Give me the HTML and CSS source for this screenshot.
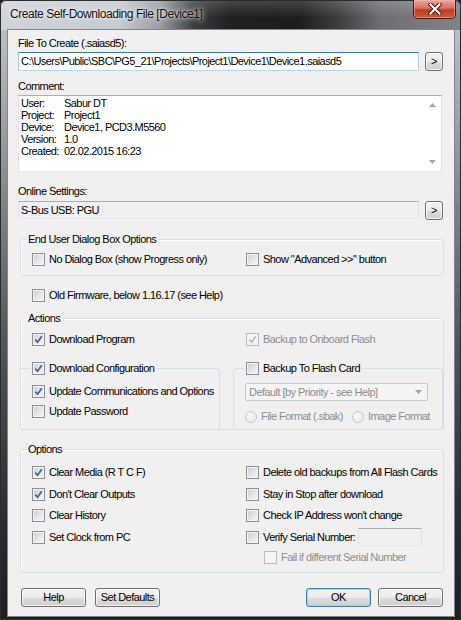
FILE: index.html
```html
<!DOCTYPE html>
<html>
<head>
<meta charset="utf-8">
<link rel="stylesheet" href="styles.css">
</head>
<body>
<div class="window">
  <div class="titlebar">
    <span class="title">Create Self-Downloading File [Device1]</span>
    <div class="close"><svg width="14" height="12" viewBox="0 0 14 12"><path d="M2.5 1.5 L11.5 10.5 M11.5 1.5 L2.5 10.5" stroke="#3a0c06" stroke-width="4" stroke-linecap="square"/><path d="M2.5 1.5 L11.5 10.5 M11.5 1.5 L2.5 10.5" stroke="#ffffff" stroke-width="2.2" stroke-linecap="square"/></svg></div>
  </div>
  <div class="frame">
    <div class="client">
      <div class="lbl">File To Create (.saiasd5):</div>
      <div class="irow">
        <div class="field focused">C:\Users\Public\SBC\PG5_21\Projects\Project1\Device1\Device1.saiasd5</div>
        <div class="btn small">&gt;</div>
      </div>

      <div class="lbl mt9">Comment:</div>
      <div class="memo">
        <div class="memo-text">
          <span>User:</span><span>Sabur DT</span>
          <span>Project:</span><span>Project1</span>
          <span>Device:</span><span>Device1, PCD3.M5560</span>
          <span>Version:</span><span>1.0</span>
          <span>Created:</span><span>02.02.2015 16:23</span>
        </div>
        <div class="vscroll">
          <svg width="7" height="4" viewBox="0 0 7 4"><path d="M0 4 L3.5 0 L7 4 Z" fill="#a7a7a7"/></svg>
          <svg width="7" height="4" viewBox="0 0 7 4"><path d="M0 0 L3.5 4 L7 0 Z" fill="#a7a7a7"/></svg>
        </div>
      </div>

      <div class="lbl mt13 mb3">Online Settings:</div>
      <div class="irow">
        <div class="field readonly">S-Bus USB: PGU</div>
        <div class="btn small">&gt;</div>
      </div>

      <fieldset class="group eu">
        <legend>End User Dialog Box Options</legend>
        <div class="two">
          <label class="chk"><span class="cb"></span>No Dialog Box (show Progress only)</label>
          <label class="chk"><span class="cb"></span>Show "Advanced &gt;&gt;" button</label>
        </div>
      </fieldset>

      <label class="chk solo"><span class="cb"></span>Old Firmware, below 1.16.17 (see Help)</label>

      <fieldset class="group actions">
        <legend>Actions</legend>
        <div class="two dp">
          <label class="chk"><span class="cb on"></span>Download Program</label>
          <label class="chk dis"><span class="cb on dis"></span>Backup to Onboard Flash</label>
        </div>
        <div class="subs">
          <fieldset class="sub left">
            <legend><label class="chk"><span class="cb on"></span>Download Configuration</label></legend>
            <label class="chk"><span class="cb on"></span>Update Communications and Options</label>
            <label class="chk mt5"><span class="cb"></span>Update Password</label>
          </fieldset>
          <fieldset class="sub right">
            <legend><label class="chk"><span class="cb"></span>Backup To Flash Card</label></legend>
            <div class="combo"><span>Default [by Priority - see Help]</span><svg width="7" height="4" viewBox="0 0 7 4"><path d="M0 0 L3.5 4 L7 0 Z" fill="#a0a0a0"/></svg></div>
            <div class="radios">
              <label class="rad dis r1"><span class="rb"></span>File Format (.sbak)</label>
              <label class="rad dis"><span class="rb"></span>Image Format</label>
            </div>
          </fieldset>
        </div>
      </fieldset>

      <fieldset class="group options">
        <legend>Options</legend>
        <div class="two grid4">
          <label class="chk"><span class="cb on"></span>Clear Media (R T C F)</label>
          <label class="chk"><span class="cb"></span>Delete old backups from All Flash Cards</label>
          <label class="chk"><span class="cb on"></span>Don't Clear Outputs</label>
          <label class="chk"><span class="cb"></span>Stay in Stop after download</label>
          <label class="chk"><span class="cb"></span>Clear History</label>
          <label class="chk"><span class="cb"></span>Check IP Address won't change</label>
          <label class="chk"><span class="cb"></span>Set Clock from PC</label>
          <div class="serial"><label class="chk sl"><span class="cb"></span>Verify Serial Number:</label><div class="sfield"></div></div>
        </div>
        <label class="chk dis fail"><span class="cb dis"></span>Fail if different Serial Number</label>
      </fieldset>

      <div class="buttons">
        <div class="bgroup">
          <div class="btn">Help</div>
          <div class="btn">Set Defaults</div>
        </div>
        <div class="bgroup right">
          <div class="btn default">OK</div>
          <div class="btn">Cancel</div>
        </div>
      </div>
    </div>
  </div>
</div>
</body>
</html>
```
FILE: styles.css
```css
* { box-sizing: border-box; }
html, body { margin: 0; padding: 0; }
body {
  width: 461px;
  height: 620px;
  background: #1c1d1f;
  overflow: hidden;
  font-family: "Liberation Sans", Arial, sans-serif;
  font-size: 11px;
  letter-spacing: -0.55px;
  color: #000;
}
.window {
  width: 461px;
  height: 620px;
  display: flex;
  flex-direction: column;
  border-radius: 6px 6px 0 0;
  background: linear-gradient(to bottom, #c4c9cf 0px, #9da2a8 120px, #55585c 330px, #2b2c2f 520px, #1d1e20 620px);
  box-shadow: inset 0 0 0 1px #2a2c2e;
}
.titlebar {
  height: 30px;
  flex: none;
  display: flex;
  justify-content: space-between;
  align-items: flex-start;
  border-radius: 6px 6px 0 0;
  background:
    linear-gradient(to bottom, rgba(255,255,255,0.18), rgba(255,255,255,0) 60%),
    linear-gradient(to right, #cfd4da 0px, #c6cbd1 120px, #9a9ea3 160px, #3a3b3d 195px, #1f2021 230px, #1c1d1e 300px, #3d3f41 340px, #6c6e71 380px, #818386 461px);
  box-shadow: inset 0 1px 0 #2a2c2e, inset 1px 0 0 #2a2c2e, inset -1px 0 0 #2a2c2e;
}
.title {
  font-family: "Liberation Sans", Arial, sans-serif;
  font-size: 12px;
  letter-spacing: -0.45px;
  margin: 7px 0 0 10px;
  line-height: 14px;
  color: #111;
  text-shadow: 0 0 6px rgba(255,255,255,0.9), 0 0 3px rgba(255,255,255,0.8);
}
.close {
  width: 43px;
  height: 19px;
  margin: 0 5px 0 0;
  border: 1px solid #4a1a12;
  border-top: none;
  border-radius: 0 0 5px 5px;
  background: linear-gradient(to bottom, #e7a79c 0%, #d9705f 45%, #c23a24 55%, #cf5a3e 100%);
  box-shadow: inset 0 0 0 1px rgba(255,200,190,0.45);
  display: flex;
  align-items: center;
  justify-content: center;
}
.frame {
  flex: 1;
  padding: 0 7px 4px 8px;
  display: flex;
}
.client {
  flex: 1;
  background: #f0f0f0;
  box-shadow: 0 0 0 1px #7f858b;
  padding: 7px 10px 0 10px;
}
.lbl { height: 13px; line-height: 13px; margin-bottom: 2px; white-space: nowrap; }
.mt9 { margin-top: 9px; }
.mt13 { margin-top: 13px; }
.mb3 { margin-bottom: 3px; }
.mt5 { margin-top: 5px; }
.irow { display: flex; gap: 6px; align-items: flex-start; height: 19px; }
.field {
  width: 401px;
  height: 19px;
  border: 1px solid #abadb3;
  border-color: #abadb3 #dbdfe6 #e3e9ef #e2e3ea;
  background: #fff;
  padding-left: 2px;
  line-height: 17px;
  white-space: nowrap;
  overflow: hidden;
}
.field.focused { border-color: #3d7bad #b5cfe7 #b7d9ed #a4c9e3; }
.field.readonly { background: #f0f0f0; height: 18px; line-height: 16px; }
.btn {
  height: 19px;
  width: 65px;
  border: 1px solid #707070;
  border-radius: 3px;
  background: linear-gradient(to bottom, #f2f2f2 0%, #ebebeb 50%, #dddddd 51%, #cfcfcf 100%);
  box-shadow: inset 0 0 0 1px rgba(255,255,255,0.7);
  display: flex;
  align-items: center;
  justify-content: center;
  line-height: 13px;
  white-space: nowrap;
}
.btn.small { width: 18px; height: 19px; font-size: 11px; }
.btn.default { border-color: #3c7fb1; box-shadow: inset 0 0 0 1px #9fd3f2; }

.memo {
  margin-top: 0;
  width: 424px;
  height: 77px;
  border: 1px solid #abadb3;
  border-color: #abadb3 #dbdfe6 #e3e9ef #e2e3ea;
  background: #fff;
  display: flex;
}
.memo-text {
  flex: 1;
  padding: 1px 0 0 2px;
  display: grid;
  grid-template-columns: 43px 1fr;
  grid-auto-rows: 12px;
  line-height: 12px;
  align-content: start;
  white-space: nowrap;
}
.vscroll {
  width: 17px;
  display: flex;
  flex-direction: column;
  justify-content: space-between;
  align-items: center;
  padding: 7px 0 7px 0;
}
.group {
  margin: 13px 0 0 2px;
  padding: 0;
  border: 1px solid #d5dfe5;
  border-radius: 3px;
  min-width: 0;
  box-shadow: inset 1px 1px 0 #fff;
}
.group > legend {
  margin-left: 5px;
  padding: 0 2px;
  line-height: 13px;
  height: 13px;
}
.two { display: grid; grid-template-columns: 214px 1fr; padding-left: 11px; }
.chk, .rad {
  display: flex;
  align-items: center;
  height: 15px;
  line-height: 13px;
  white-space: nowrap;
}
.cb {
  width: 13px;
  height: 13px;
  flex: none;
  margin-right: 4px;
  border: 1px solid #8e8f8f;
  background: linear-gradient(135deg, #c9cdd3 0%, #e4e6e8 55%, #f8f8f8 100%);
  box-shadow: inset 0 0 0 1px #f4f4f4;
  position: relative;
}
.cb.on::after {
  content: "";
  position: absolute;
  left: 1px;
  top: 1px;
  width: 9px;
  height: 9px;
  background: url("data:image/svg+xml;utf8,<svg xmlns='http://www.w3.org/2000/svg' width='9' height='9' viewBox='0 0 9 9'><path d='M1.3 4.6 L3.6 7.2 L7.8 1.2' fill='none' stroke='%234a5c92' stroke-width='1.7'/></svg>") no-repeat;
}
.cb.dis { border-color: #bcbcbc; background: #f4f4f4; box-shadow: none; }
.cb.on.dis::after {
  background: url("data:image/svg+xml;utf8,<svg xmlns='http://www.w3.org/2000/svg' width='9' height='9' viewBox='0 0 9 9'><path d='M1.3 4.6 L3.6 7.2 L7.8 1.2' fill='none' stroke='%23b4b4b4' stroke-width='1.5'/></svg>") no-repeat;
}
.dis { color: #8d8d8d; }
.eu .two { padding-top: 6px; padding-bottom: 8px; }
.solo { margin: 12px 0 0 14px; }
.actions { margin-top: 9px; }
.dp { padding-top: 7px; }
.subs {
  display: grid;
  grid-template-columns: 199px 1fr;
  column-gap: 13px;
  margin-top: 14px;
}
.sub {
  margin: 0 0 -1px 0;
  padding: 0;
  border: 1px solid #d5dfe5;
  border-radius: 3px;
  min-width: 0;
}
.sub > legend { padding: 0 2px; height: 15px; }
.sub.left { border-left: none; border-radius: 0 3px 3px 0; padding: 8px 0 10px 11px; }
.sub.left > legend { margin-left: -2px; }
.sub.right { padding: 7px 0 0 11px; }
.sub.right > legend { margin-left: -1px; }
.combo {
  width: 183px;
  height: 18px;
  border: 1px solid #c5c9cc;
  border-radius: 2px;
  background: #f4f4f4;
  color: #8d8d8d;
  display: flex;
  align-items: center;
  justify-content: space-between;
  padding: 0 5px 0 3px;
  white-space: nowrap;
}
.radios { display: flex; margin-top: 8px; }
.r1 { width: 107px; }
.rb {
  width: 12px;
  height: 12px;
  flex: none;
  margin-right: 4px;
  border: 1px solid #c6c8ca;
  border-radius: 50%;
  background: radial-gradient(circle at 40% 40%, #f8f8f8, #e6e6e6);
}
.options { margin-top: 13px; }
.grid4 { padding-top: 9px; row-gap: 6.5px; }
.serial { display: flex; align-items: center; height: 15px; }
.sl { width: 112px; }
.sfield {
  width: 64px;
  height: 18px;
  border: 1px solid #abadb3;
  border-color: #abadb3 #dbdfe6 #e3e9ef #e2e3ea;
  background: #f0f0f0;
  flex: none;
}
.fail { margin: 5px 0 7px 243px; }
.buttons {
  margin-top: 15px;
  display: flex;
  justify-content: space-between;
  padding: 0 1px 0 3px;
}
.bgroup { display: flex; gap: 9px; }
.bgroup.right { gap: 7px; }
```
